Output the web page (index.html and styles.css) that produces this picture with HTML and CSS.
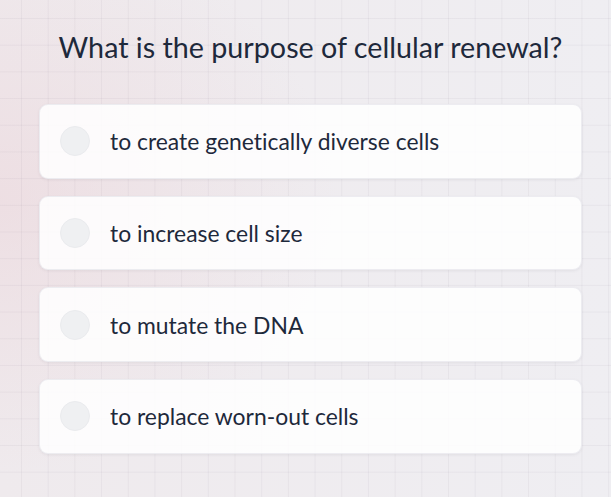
FILE: index.html
```html
<!DOCTYPE html>
<html lang="en">
<head>
<meta charset="utf-8">
<title>Quiz</title>
<link rel="stylesheet" href="styles.css">
</head>
<body>
<main class="quiz">
  <h1 class="question">What is the purpose of cellular renewal?</h1>
  <ul class="options">
    <li class="option"><span class="radio"></span><span class="label">to create genetically diverse cells</span></li>
    <li class="option"><span class="radio"></span><span class="label">to increase cell size</span></li>
    <li class="option"><span class="radio"></span><span class="label">to mutate the DNA</span></li>
    <li class="option"><span class="radio"></span><span class="label">to replace worn-out cells</span></li>
  </ul>
</main>
</body>
</html>
```
FILE: styles.css
```css
html, body {
  margin: 0;
  padding: 0;
  height: 100%;
}
body {
  font-family: Lato, "Open Sans", sans-serif;
  font-variant-ligatures: none;
  color: #1f2937;
  background-color: #f0eef2;
  background-image:
    linear-gradient(to right, rgba(120, 110, 130, 0.07) 1px, transparent 1px),
    linear-gradient(to bottom, rgba(120, 110, 130, 0.07) 1px, transparent 1px),
    radial-gradient(ellipse 55% 55% at 0% 40%, rgba(236, 215, 220, 0.6), rgba(236, 215, 220, 0) 100%),
    linear-gradient(to right, #efeaed, #efeef2);
  background-size: 26.7px 26.7px, 26.7px 26.7px, 100% 100%, 100% 100%;
  background-position: 21px 18px, 21px 18px, 0 0, 0 0;
  overflow: hidden;
}
.quiz {
  padding: 29px 29px 0 39px;
}
.question {
  margin: 0 0 39px;
  font-size: 28.7px;
  font-weight: 400;
  line-height: 36px;
  text-align: center;
  color: #1e293b;
}
.options {
  list-style: none;
  margin: 0;
  padding: 0;
  display: flex;
  flex-direction: column;
  gap: 17px;
}
.option {
  display: flex;
  align-items: center;
  gap: 20px;
  height: 74.7px;
  box-sizing: border-box;
  padding: 0 20px;
  background: rgba(255, 255, 255, 0.86);
  border: 1px solid rgba(225, 225, 232, 0.6);
  border-radius: 9px;
  box-shadow: 0 1px 3px rgba(60, 60, 80, 0.08);
}
.radio {
  width: 30px;
  height: 30px;
  border-radius: 50%;
  background: #eff0f2;
  border: 1px solid #eaebee;
  box-sizing: border-box;
  flex: none;
}
.label {
  font-size: 22.9px;
  color: #1e293b;
}
```
